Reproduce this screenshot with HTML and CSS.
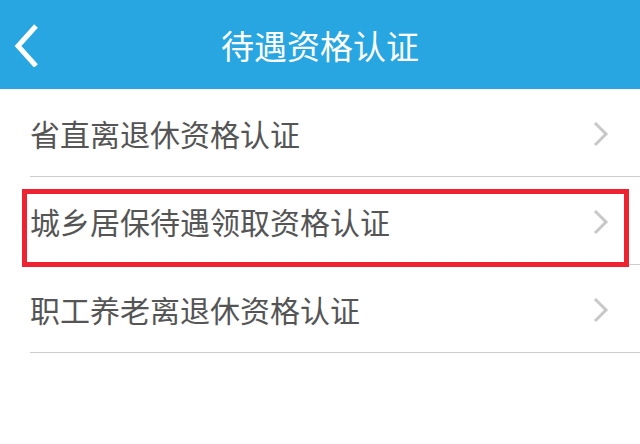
FILE: index.html
```html
<!DOCTYPE html>
<html lang="zh-CN">
<head>
    <meta charset="UTF-8">
    <title>待遇资格认证</title>
    <link rel="stylesheet" href="styles.css">
</head>
<body>
	<header class="bar">
		<div class="back">
			<svg width="30" height="44" viewBox="0 0 30 44"><polyline points="24,3 6,23 24,43" fill="none" stroke="#fff" stroke-width="5"/></svg>
		</div>
		<div class="title">待遇资格认证</div>
	</header>
	<div class="list">
		<div class="row">
			<span class="label">省直离退休资格认证</span>
			<svg class="arrow" width="16" height="26" viewBox="0 0 16 26"><polyline points="2,2 13,13 2,24" fill="none" stroke="#c8c8c8" stroke-width="3"/></svg>
		</div>
		<div class="row picked">
			<span class="label">城乡居保待遇领取资格认证</span>
			<svg class="arrow" width="16" height="26" viewBox="0 0 16 26"><polyline points="2,2 13,13 2,24" fill="none" stroke="#c8c8c8" stroke-width="3"/></svg>
			<div class="mark"></div>
		</div>
		<div class="row">
			<span class="label">职工养老离退休资格认证</span>
			<svg class="arrow" width="16" height="26" viewBox="0 0 16 26"><polyline points="2,2 13,13 2,24" fill="none" stroke="#c8c8c8" stroke-width="3"/></svg>
		</div>
	</div>
</body>
</html>
```

FILE: styles.css
```css
body {
	margin: 0;
	padding: 0;
	background: #fff;
	font-family: "Noto Sans CJK SC", "Noto Sans", sans-serif;
}
.bar {
	position: relative;
	height: 89px;
	background-color: #27a6e1;
	display: flex;
	align-items: center;
	justify-content: center;
}
.back {
	position: absolute;
	left: 12px;
	top: 23px;
	width: 30px;
	height: 44px;
}
.back svg {
	display: block;
}
.title {
	color: #fff;
	font-size: 33px;
	line-height: 1;
	margin-top: 2px;
}
.list {
	display: flex;
	flex-direction: column;
}
.row {
	position: relative;
	height: 87px;
	margin-left: 30px;
	padding-right: 31px;
	border-bottom: 1px solid #cdcdcd;
	display: flex;
	align-items: center;
	justify-content: space-between;
}
.label {
	color: #555;
	font-size: 30px;
	line-height: 1;
	margin-top: 1px;
}
.arrow {
	display: block;
	margin-top: 2px;
}
.mark {
	position: absolute;
	left: -8px;
	top: 12px;
	width: 597px;
	height: 68px;
	border: 5px solid #ee2230;
}
```
